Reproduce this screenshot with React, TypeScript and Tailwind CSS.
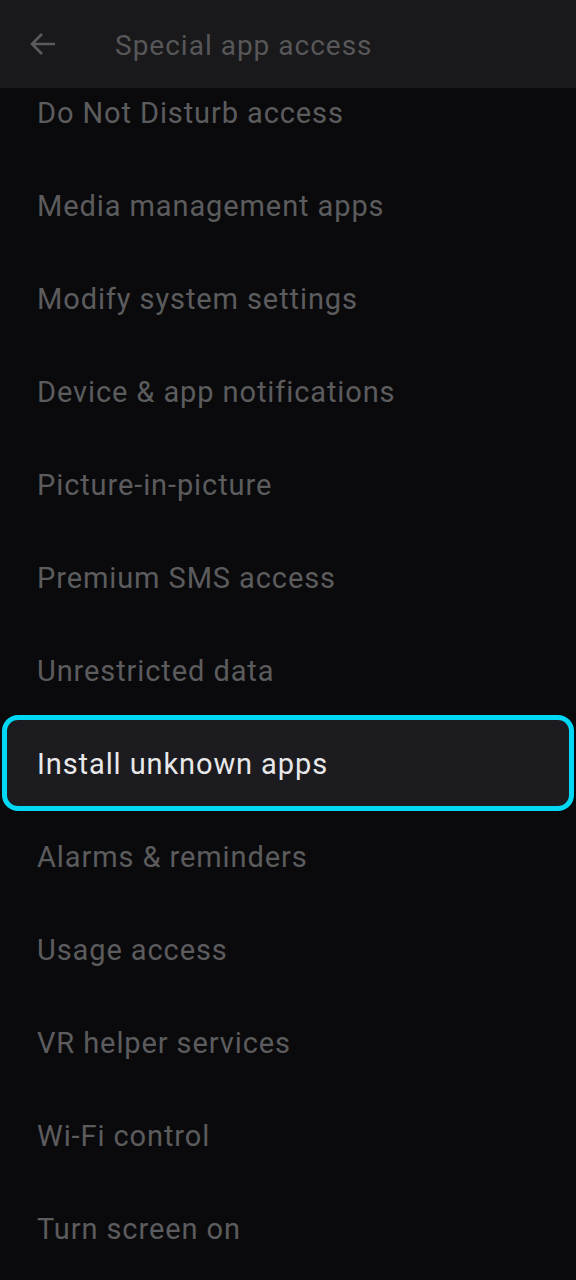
import React from "react";

const items = [
  "Do Not Disturb access",
  "Media management apps",
  "Modify system settings",
  "Device & app notifications",
  "Picture-in-picture",
  "Premium SMS access",
  "Unrestricted data",
  "Install unknown apps",
  "Alarms & reminders",
  "Usage access",
  "VR helper services",
  "Wi-Fi control",
  "Turn screen on",
];

export default function App() {
  return (
    <div
      className="w-[576px] h-[1280px] overflow-hidden bg-[#0a0a0c]"
      style={{ fontFamily: "Roboto, 'Noto Sans', sans-serif" }}
    >
      <div className="relative z-10 h-[88px] bg-[#19191b] flex items-center">
        <div className="w-[115px] flex items-center pl-[30px]">
          <svg width="26" height="24" viewBox="0 0 26 24" fill="none">
            <path
              d="M25 12H2.5M12 2L2 12l10 10"
              stroke="#5b5b5d"
              strokeWidth="2.6"
              strokeLinecap="butt"
            />
          </svg>
        </div>
        <span className="text-[28px] tracking-[1px] text-[#575759] leading-none mt-[4px]">
          Special app access
        </span>
      </div>
      <div className="-mt-[23px] flex flex-col">
        {items.map((t) =>
          t === "Install unknown apps" ? (
            <div key={t} className="h-[93px] flex items-center px-[2px]">
              <div className="w-full h-[96px] shrink-0 rounded-[16px] border-[5px] border-[#00d8f6] bg-[#1c1c20] flex items-center pl-[30px] pt-[3px]">
                <span className="text-[29px] tracking-[0.9px] text-[#e8e8ea] leading-none">{t}</span>
              </div>
            </div>
          ) : (
            <div key={t} className="h-[93px] flex items-center pl-[37px] pt-[3px]">
              <span className="text-[29px] tracking-[0.9px] text-[#5c5c5e] leading-none">{t}</span>
            </div>
          )
        )}
      </div>
    </div>
  );
}
